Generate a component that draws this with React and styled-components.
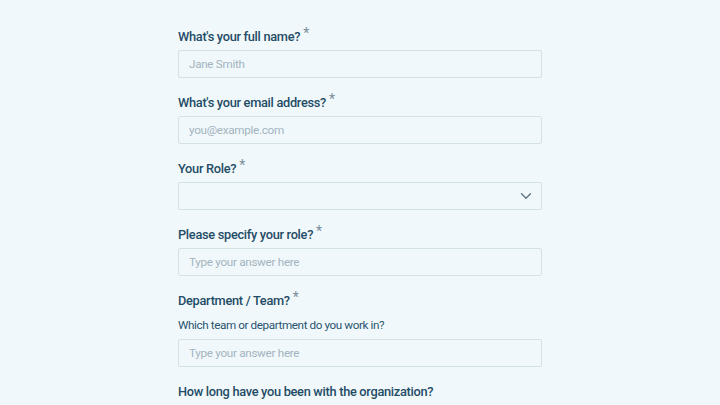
import React from "react";
import styled, { createGlobalStyle } from "styled-components";

const Global = createGlobalStyle`
  html, body { margin: 0; padding: 0; background: #f1f8fb; }
  body { font-family: Roboto, "Liberation Sans", sans-serif; }
  * { box-sizing: border-box; }
`;

const Page = styled.div`
  min-height: 405px;
  background: #f1f8fb;
  padding-top: 28px;
  display: flex;
  justify-content: center;
`;

const Form = styled.form`
  width: 364px;
  display: flex;
  flex-direction: column;
  gap: 16px;
`;

const Field = styled.div`
  display: flex;
  flex-direction: column;
`;

const Label = styled.label`
  display: block;
  height: 18px;
  font-size: 12.8px;
  letter-spacing: -0.3px;
  line-height: 18px;
  font-weight: 500;
  color: #1f4c66;
  margin-bottom: 4px;
`;

const Star = styled.span`
  color: #7b8f9b;
  font-size: 14px;
  line-height: 0;
  font-weight: 400;
  margin-left: 3px;
  position: relative;
  top: -3px;
`;

const Desc = styled.div`
  height: 18px;
  font-size: 11.7px;
  letter-spacing: -0.4px;
  line-height: 18px;
  color: #2a5470;
  margin: 2px 0 5px;
`;

const Input = styled.input`
  display: block;
  height: 28px;
  width: 100%;
  margin: 0;
  border: 1px solid #d3e2e9;
  border-radius: 2px;
  background: #f1f8fb;
  padding: 0 10px;
  font-family: inherit;
  font-size: 11.7px;
  letter-spacing: -0.3px;
  color: #1e4a63;
  outline: none;
  &::placeholder { color: #a2b4bf; }
`;

const SelectBox = styled.div`
  height: 28px;
  border: 1px solid #d3e2e9;
  border-radius: 2px;
  display: flex;
  align-items: center;
  justify-content: flex-end;
  padding-right: 9px;
`;

const Chevron = () => (
  <svg width="12" height="8" viewBox="0 0 12 8" fill="none">
    <path d="M1.5 1.8 L6 6.2 L10.5 1.8" stroke="#5d717d" strokeWidth="1.3" strokeLinecap="round" strokeLinejoin="round" />
  </svg>
);

const Req = () => <Star>*</Star>;

export default function App() {
  return (
    <Page>
      <Global />
      <Form>
        <Field>
          <Label>What's your full name?<Req /></Label>
          <Input placeholder="Jane Smith" />
        </Field>
        <Field>
          <Label>What's your email address?<Req /></Label>
          <Input placeholder="you@example.com" />
        </Field>
        <Field>
          <Label>Your Role?<Req /></Label>
          <SelectBox><Chevron /></SelectBox>
        </Field>
        <Field>
          <Label>Please specify your role?<Req /></Label>
          <Input placeholder="Type your answer here" />
        </Field>
        <Field>
          <Label>Department / Team?<Req /></Label>
          <Desc>Which team or department do you work in?</Desc>
          <Input placeholder="Type your answer here" />
        </Field>
        <Field>
          <Label>How long have you been with the organization?</Label>
        </Field>
      </Form>
    </Page>
  );
}
